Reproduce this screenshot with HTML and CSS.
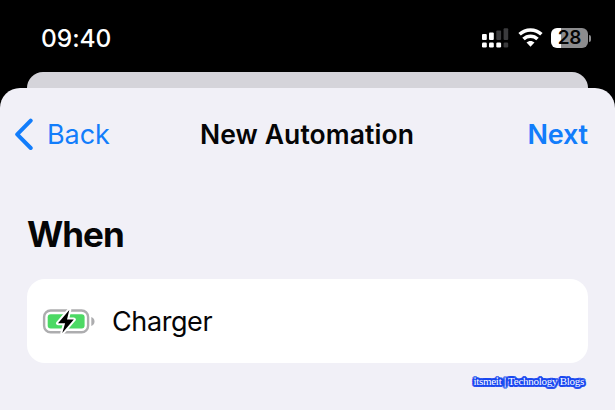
FILE: index.html
```html
<!DOCTYPE html>
<html lang="en">
<head>
<meta charset="utf-8">
<title>New Automation</title>
<link rel="stylesheet" href="styles.css">
</head>
<body>
<div class="screen">
  <header class="status">
    <span class="time">09:40</span>
    <div class="indicators">
      <svg class="signal" width="27" height="20" viewBox="0 0 27 20">
        <g fill="#fff"><rect x="0" y="6" width="4.8" height="6" rx="1"/><rect x="7" y="4.5" width="4.8" height="7.5" rx="1"/>
        <rect x="0" y="14.6" width="4.8" height="4.8" rx="1.2"/><rect x="7" y="14.6" width="4.8" height="4.8" rx="1.2"/><rect x="14.3" y="14.6" width="4.8" height="4.8" rx="1.2"/></g>
        <g fill="#3b3b3d"><rect x="14.3" y="2.5" width="4.8" height="9.5" rx="1"/><rect x="21.6" y="0.3" width="4.6" height="11.7" rx="1"/><rect x="21.6" y="14.6" width="4.6" height="4.8" rx="1.2"/></g>
      </svg>
      <svg class="wifi" width="25" height="20" viewBox="0 0 25 20">
        <g fill="none" stroke="#fff" stroke-width="3.5"><path d="M1.6 6.300a15.700 15.700 0 0 1 21.800 0"/><path d="M5.500 11.100a9.900 9.900 0 0 1 14 0"/></g>
        <path fill="#fff" d="M12.500 18.700 8.500 14.600c2.200-2.200 5.800-2.200 8 0z"/>
      </svg>
      <div class="battery"><span class="level">28</span><i class="tip"></i></div>
    </div>
  </header>
  <div class="back-sheet"></div>
  <main class="sheet">
    <nav class="nav">
      <a class="back"><svg width="19" height="32" viewBox="0 0 19 32"><path d="M16.700 2.600 3.200 16.300 16.700 30" fill="none" stroke="#127dfb" stroke-width="4" stroke-linecap="round" stroke-linejoin="round"/></svg><span>Back</span></a>
      <h1>New Automation</h1>
      <a class="next">Next</a>
    </nav>
    <h2>When</h2>
    <section class="card">
      <svg width="53" height="28" viewBox="0 0 53 28">
        <rect x="2.100" y="3.500" width="44" height="21.800" rx="6.500" fill="none" stroke="#adadaf" stroke-width="2.400"/>
        <rect x="5.700" y="7.200" width="36.900" height="14.400" rx="3" fill="#4cd964"/>
        <path d="M27.300 3 16 16.300h7.100L20.300 26 31.800 12.500h-6.800z" fill="#000" stroke="#fff" stroke-width="4" stroke-linejoin="round" paint-order="stroke"/>
        <path d="M49.300 10v9c4.300-1.200 4.300-7.800 0-9z" fill="#adadaf"/>
      </svg>
      <span>Charger</span>
    </section>
    <footer>itsmeit | Technology Blogs</footer>
  </main>
</div>
</body>
</html>
```
FILE: styles.css
```css
* { box-sizing: border-box; }
body { margin: 0; background: #000; font-family: Inter, "Liberation Sans", sans-serif; color: #050506; }
.screen { width: 615px; height: 410px; overflow: hidden; display: flex; flex-direction: column; }
.status { height: 72px; flex: none; display: flex; justify-content: space-between; padding: 0 24px 0 41px; }
.time { color: #fff; font-size: 24.500px; font-weight: 550; line-height: 32px; margin-top: 22px; letter-spacing: -0.050px; }
.indicators { display: flex; margin-top: 28px; height: 20px; }
.wifi { margin: 0 8px 0 9px; }
.battery { display: flex; align-items: center; width: 40px; height: 20px; }
.level { width: 37px; height: 20px; flex: none; border-radius: 6px; background: linear-gradient(90deg, #fff 10px, #8c8c8e 10px); color: #050505; font-size: 19px; font-weight: 600; line-height: 20px; text-align: center; letter-spacing: -0.200px; }
.tip { width: 2px; height: 7px; margin-left: 1px; background: #8c8c8e; border-radius: 0 3px 3px 0; }
.back-sheet { height: 16px; flex: none; margin: 0 27px; background: #d5d4da; border-radius: 16px 16px 0 0; }
.sheet { flex: 1; background: #f1f0f7; border-radius: 20px 20px 0 0; padding: 30px 27px 0; }
.nav { display: flex; justify-content: space-between; align-items: center; height: 32px; margin-left: -13px; font-size: 27px; line-height: 32px; }
.back, .next { color: #127dfb; }
.back { display: flex; gap: 14px; letter-spacing: -0.100px; width: 186px; }
.back svg { flex: none; }
.back span, .next { padding-top: 1px; }
h1 { margin: 0; font-size: 26.500px; font-weight: 600; line-height: 32px; letter-spacing: 0.100px; white-space: nowrap; }
.next { flex: 1; text-align: right; font-weight: 600; letter-spacing: -0.150px; }
h2 { margin: 62px 0 0; font-size: 35px; line-height: 44px; font-weight: 700; letter-spacing: -1px; }
.card { height: 84px; margin-top: 23px; border-radius: 18px; background: #fff; display: flex; align-items: center; padding-left: 15px; gap: 17px; font-size: 27px; letter-spacing: -0.400px; }
footer { margin: 11px 4px 0; text-align: right; font: 11px/15px "Liberation Serif", serif; letter-spacing: -0.270px; color: #fff; text-shadow: 1px 0 #1746f0, -1px 0 #1746f0, 0 2px #1746f0, 0 -2px #1746f0, 1px 1px #1746f0, -1px -1px #1746f0, 1px -1px #1746f0, -1px 1px #1746f0, 2px 0 #1746f0, -2px 0 #1746f0, 1px 2px #1746f0, -1px 2px #1746f0, 1px -2px #1746f0, -1px -2px #1746f0, 2px 1px #1746f0, -2px 1px #1746f0, 2px -1px #1746f0, -2px -1px #1746f0; }
```
